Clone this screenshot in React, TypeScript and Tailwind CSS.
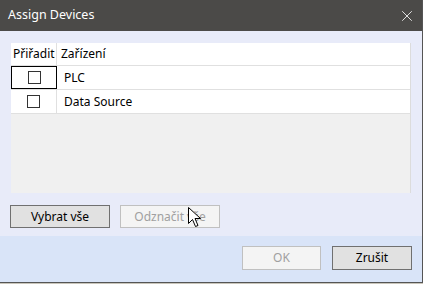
import { X } from 'lucide-react';

const rows = ['PLC', 'Data Source'];

function Checkbox() {
  return <div className="w-[13px] h-[13px] border border-[#333333] bg-white" />;
}

export default function App() {
  return (
    <div
      className="relative w-[423px] h-[284px] flex flex-col overflow-hidden text-[12px] text-black"
      style={{ fontFamily: '"Noto Sans", "Segoe UI", sans-serif' }}
    >
      <div className="flex-1 flex flex-col border-r border-b border-[#555555]">
        {/* Title bar */}
        <div className="h-[31px] bg-[#4b4a48] flex items-center justify-between pl-[8px] pr-[6px] text-white">
          <span className="text-[12.5px]">Assign Devices</span>
          <X className="w-[18px] h-[18px]" strokeWidth={1.1} />
        </div>

        {/* Body */}
        <div className="flex-1 bg-[#e8ebf9] px-[11px] pt-[12px]">
          <div className="h-[150px] bg-[#f0f0f0] flex flex-col border-r border-[#dcdcdc]">
            <div className="h-[23px] bg-white flex items-center border-b border-[#e0e0e0]">
              <div className="w-[46px] h-full flex items-center pl-[2px] border-r border-[#e0e0e0]">Přiřadit</div>
              <div className="pl-[4px]">Zařízení</div>
            </div>
            {rows.map((r, i) => (
              <div key={r} className="h-[24px] bg-white flex items-stretch border-b border-[#e0e0e0]">
                <div
                  className={`w-[46px] flex items-center justify-center ${
                    i === 0 ? 'border border-black' : 'border-r border-[#e0e0e0]'
                  }`}
                >
                  <Checkbox />
                </div>
                <div className="flex items-center pl-[7px]">{r}</div>
              </div>
            ))}
          </div>

          <div className="flex gap-[10px] mt-[12px] -ml-[1px]">
            <button className="w-[100px] h-[23px] bg-[#e1e1e1] border border-[#707070] flex items-center justify-center">
              Vybrat vše
            </button>
            <button className="w-[100px] h-[23px] bg-[#f4f4f4] border border-[#c0c0c0] text-[#a0a0a0] flex items-center justify-center">
              Odznačit vše
            </button>
          </div>
        </div>

        {/* Footer */}
        <div className="h-[46px] bg-[#d9e4f8] flex justify-end items-start gap-[11px] pt-[10px] pr-[10px]">
          <button className="w-[79px] h-[24px] bg-[#f4f4f4] border border-[#c0c0c0] text-[#a0a0a0] flex items-center justify-center">
            OK
          </button>
          <button className="w-[80px] h-[24px] bg-[#e1e1e1] border border-[#707070] flex items-center justify-center">
            Zrušit
          </button>
        </div>
      </div>
      <div className="h-[1px] bg-[#c9c5ba]" />

      {/* Mouse cursor */}
      <svg className="absolute left-[188px] top-[207px]" width="14" height="22" viewBox="0 0 14 22">
        <path
          d="M0.5 0.5 L0.5 16.5 L4.5 12.5 L7.5 19.5 L10 18.5 L7 11.5 L12.5 11.5 Z"
          fill="white"
          stroke="black"
          strokeWidth="1"
          strokeLinejoin="miter"
        />
      </svg>
    </div>
  );
}
